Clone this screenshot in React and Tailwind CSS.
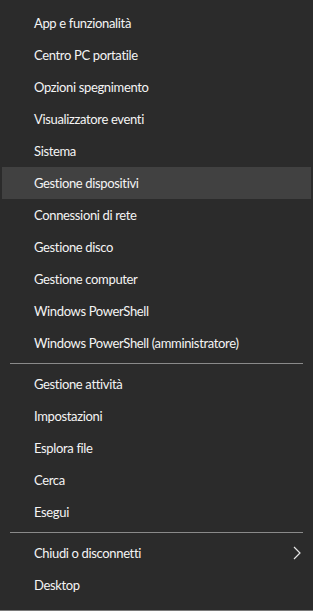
export default function App() {
  const g1 = [
    "App e funzionalità",
    "Centro PC portatile",
    "Opzioni spegnimento",
    "Visualizzatore eventi",
    "Sistema",
    "Gestione dispositivi",
    "Connessioni di rete",
    "Gestione disco",
    "Gestione computer",
    "Windows PowerShell",
    "Windows PowerShell (amministratore)",
  ];
  const g2 = ["Gestione attività", "Impostazioni", "Esplora file", "Cerca", "Esegui"];
  const Item = ({ label, active, arrow }) => (
    <div
      className={
        "mx-[2px] h-[32px] flex items-center pl-[32px] pr-[12px] text-[13px] tracking-[-0.35px] text-[#f4f4f4] " +
        (active ? "bg-[#414141]" : "")
      }
    >
      <span className="flex-1 leading-none pt-[1px]">{label}</span>
      {arrow && (
        <svg width="8" height="14" viewBox="0 0 8 14" className="mr-[-2px]">
          <path d="M1 1 L7 7 L1 13" fill="none" stroke="#e6e6e6" strokeWidth="1.2" />
        </svg>
      )}
    </div>
  );
  const Sep = () => <div className="mx-[10px] my-[4px] h-px bg-[#8a8a8a]" />;
  return (
    <div
      className="w-[313px] h-[611px] bg-[#2b2b2b] border-b border-[#7a7a7a] pt-[7px] flex flex-col"
      style={{ fontFamily: 'Lato, "Noto Sans", sans-serif' }}
    >
      {g1.map((l) => (
        <Item key={l} label={l} active={l === "Gestione dispositivi"} />
      ))}
      <Sep />
      {g2.map((l) => (
        <Item key={l} label={l} />
      ))}
      <Sep />
      <Item label="Chiudi o disconnetti" arrow />
      <Item label="Desktop" />
    </div>
  );
}
